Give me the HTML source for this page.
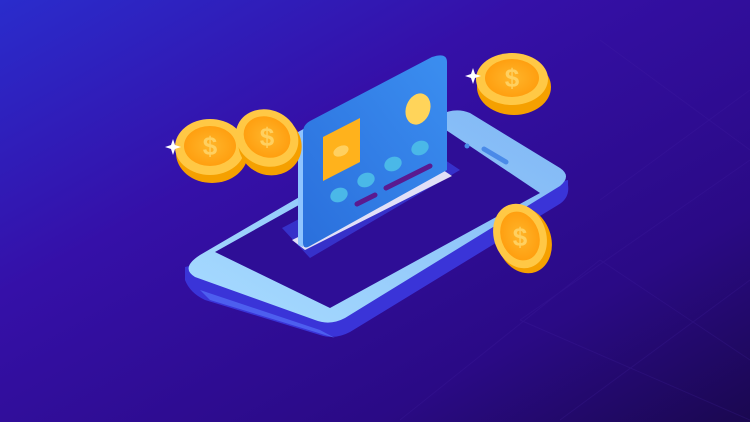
<!DOCTYPE html>
<html><head><style>html,body{margin:0;padding:0;width:750px;height:422px;overflow:hidden}</style></head>
<body>
<svg width="750" height="422" viewBox="0 0 750 422" xmlns="http://www.w3.org/2000/svg">
<defs>
<linearGradient id="bg" x1="0" y1="0" x2="1" y2="1">
<stop offset="0" stop-color="#2a2ccc"/><stop offset="0.35" stop-color="#3510a8"/><stop offset="0.75" stop-color="#2a0a85"/><stop offset="1" stop-color="#1a0850"/></linearGradient>
<linearGradient id="face" x1="0" y1="1" x2="1" y2="0">
<stop offset="0" stop-color="#a8dcff"/><stop offset="1" stop-color="#7fb6f5"/></linearGradient>
<linearGradient id="card" x1="0" y1="1" x2="1" y2="0">
<stop offset="0" stop-color="#2a6fdc"/><stop offset="1" stop-color="#3b8ef0"/></linearGradient>
<radialGradient id="coin" cx="0.5" cy="0.5" r="0.5"><stop offset="0" stop-color="#ffb52a"/><stop offset="1" stop-color="#ff9f10"/></radialGradient>
</defs>
<rect width="750" height="422" fill="url(#bg)"/>
<g stroke="#4a2aa8" stroke-width="1" opacity="0.2" fill="none">
<path d="M600 40 L750 150 M600 200 L750 90 M560 420 L750 280 M520 320 L750 160 M520 320 L750 420 M400 420 L600 260 M600 260 L750 360"/>
</g>
<path d="M185 267 L185 280 Q190 293 205 300 L320 335 Q335 340 350 332 L558 205 Q570 198 568 185 L568 180 Z" fill="#3a34d8"/>
<path d="M200 290 L320 330 L335 338 L210 300 Z" fill="#5a7cff" opacity="0.6"/>
<path d="M200 255 L440 115 Q455 107 470 113 L560 168 Q572 176 560 186 L345 318 Q330 326 315 320 L195 277 Q180 268 200 255 Z" fill="url(#face)"/>
<path d="M215 252 L440 126 L540 193 L330 308 Z" fill="#2e0e96"/>
<path d="M282 228 L430 150 L460 170 L310 258 Z" fill="#3a40e0" opacity="0.7"/>
<path d="M292 240 L440 168 L452 176 L305 250 Z" fill="#ffffff" opacity="0.85"/>
<circle cx="467" cy="146" r="2.5" fill="#4a8ae8"/>
<path d="M484 149 L506 162" stroke="#4a8ae8" stroke-width="5" stroke-linecap="round"/>
<path d="M298 132 L435 57 L440 57 L303 132 L303 247 L298 245 Z" fill="#8fc4ff"/>
<path d="M303 132 Q303 125 310 121 L432 57 Q447 52 447 62 L447 170 L310 246 Q303 250 303 243 Z" fill="url(#card)"/>
<path d="M323 137 L360 118 L360 162 L323 181 Z" fill="#ffb21c"/>
<ellipse cx="341" cy="151" rx="8" ry="5" transform="rotate(-25 341 151)" fill="#ffd060"/>
<ellipse cx="418" cy="109" rx="12" ry="16" transform="rotate(20 418 109)" fill="#ffd45a"/>
<g fill="#4ab8e8">
<ellipse cx="339" cy="195" rx="9" ry="7" transform="rotate(-25 339 195)"/>
<ellipse cx="366" cy="180" rx="9" ry="7" transform="rotate(-25 366 180)"/>
<ellipse cx="393" cy="164" rx="9" ry="7" transform="rotate(-25 393 164)"/>
<ellipse cx="420" cy="148" rx="9" ry="7" transform="rotate(-25 420 148)"/>
</g>
<path d="M357 204 L375 195 M386 188 L430 166" stroke="#5a1a90" stroke-width="5" stroke-linecap="round"/>
<g>
<ellipse cx="212" cy="153" rx="36" ry="30" fill="#f5a000"/>
<ellipse cx="210" cy="147" rx="35" ry="28" fill="#ffc845"/>
<ellipse cx="210" cy="146" rx="26" ry="20" fill="url(#coin)"/>
<text x="210" y="155" font-family="Liberation Sans, sans-serif" font-weight="bold" font-size="26" fill="#ffd060" text-anchor="middle">$</text>
</g>
<g>
<ellipse cx="270" cy="145" rx="32" ry="30" fill="#f5a000" transform="rotate(25 270 145)"/>
<ellipse cx="267" cy="138" rx="32" ry="28" fill="#ffc845" transform="rotate(25 267 138)"/>
<ellipse cx="267" cy="137" rx="24" ry="20" fill="url(#coin)" transform="rotate(25 267 137)"/>
<text x="267" y="146" font-family="Liberation Sans, sans-serif" font-weight="bold" font-size="26" fill="#ffd060" text-anchor="middle">$</text>
</g>
<g>
<ellipse cx="514" cy="87" rx="37" ry="28" fill="#f5a000"/>
<ellipse cx="512" cy="79" rx="36" ry="26" fill="#ffc845"/>
<ellipse cx="512" cy="78" rx="27" ry="19" fill="url(#coin)"/>
<text x="512" y="87" font-family="Liberation Sans, sans-serif" font-weight="bold" font-size="26" fill="#ffd060" text-anchor="middle">$</text>
</g>
<g>
<ellipse cx="524" cy="240" rx="27" ry="34" fill="#f5a000" transform="rotate(-20 524 240)"/>
<ellipse cx="520" cy="236" rx="26" ry="33" fill="#ffc845" transform="rotate(-20 520 236)"/>
<ellipse cx="520" cy="236" rx="19" ry="25" fill="url(#coin)" transform="rotate(-20 520 236)"/>
<text x="520" y="246" font-family="Liberation Sans, sans-serif" font-weight="bold" font-size="26" fill="#ffd060" text-anchor="middle">$</text>
</g>
<path d="M173 139 L175 145 L181 147 L175 149 L173 155 L171 149 L165 147 L171 145 Z" fill="#fff"/>
<path d="M473 68 L475 74 L481 76 L475 78 L473 84 L471 78 L465 76 L471 74 Z" fill="#fff"/>
</svg>
</body></html>
